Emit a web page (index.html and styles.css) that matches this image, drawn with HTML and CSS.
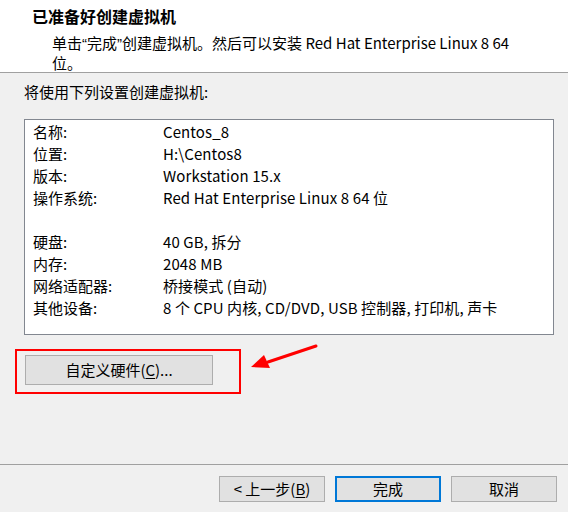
FILE: index.html
```html
<!DOCTYPE html>
<html lang="zh-CN">
<head>
<meta charset="utf-8">
<title>新建虚拟机向导</title>
<link rel="stylesheet" href="styles.css">
</head>
<body>
<div class="wizard">
  <header class="head">
    <div class="title">已准备好创建虚拟机</div>
    <div class="subtitle">单击<span class="q">“</span>完成<span class="q">”</span>创建虚拟机。然后可以安装 Red Hat Enterprise Linux 8 64<br>位。</div>
  </header>
  <main class="content">
    <div class="intro">将使用下列设置创建虚拟机:</div>
    <div class="summary">
      <div class="row"><span class="key">名称:</span><span class="val">Centos_8</span></div>
      <div class="row"><span class="key">位置:</span><span class="val">H:\Centos8</span></div>
      <div class="row"><span class="key">版本:</span><span class="val">Workstation 15.x</span></div>
      <div class="row"><span class="key">操作系统:</span><span class="val">Red Hat Enterprise Linux 8 64 位</span></div>
      <div class="row"><span class="key"></span><span class="val"></span></div>
      <div class="row"><span class="key">硬盘:</span><span class="val">40 GB, 拆分</span></div>
      <div class="row"><span class="key">内存:</span><span class="val">2048 MB</span></div>
      <div class="row"><span class="key">网络适配器:</span><span class="val">桥接模式 (自动)</span></div>
      <div class="row"><span class="key">其他设备:</span><span class="val">8 个 CPU 内核, CD/DVD, USB 控制器, 打印机, 声卡</span></div>
    </div>
    <div class="custom-wrap">
      <button class="btn custom">自定义硬件(<u>C</u>)...</button>
      <div class="highlight"></div>
      <svg class="arrow" width="70" height="30" viewBox="0 0 70 30">
        <line x1="66" y1="3" x2="18" y2="19" stroke="#ff0000" stroke-width="3" stroke-linecap="round"/>
        <polygon points="1,24 14,12 20,25" fill="#ff0000"/>
      </svg>
    </div>
  </main>
  <footer class="foot">
    <button class="btn">&lt; 上一步(<u>B</u>)</button>
    <button class="btn primary">完成</button>
    <button class="btn">取消</button>
  </footer>
</div>
</body>
</html>
```

FILE: styles.css
```css
* { box-sizing: border-box; }
html, body {
  margin: 0;
  padding: 0;
  width: 568px;
  height: 512px;
  overflow: hidden;
  background: #f0f0f0;
}
body {
  font-family: "Noto Sans CJK SC", "Noto Sans", sans-serif;
  font-size: 15px;
  color: #000;
}
.wizard {
  display: flex;
  flex-direction: column;
  height: 512px;
}
.head {
  background: #fff;
  height: 73px;
  border-bottom: 1px solid #a0a0a0;
  padding: 6px 0 0 32px;
}
.title {
  font-weight: bold;
  font-size: 16px;
  line-height: 20px;
}
.subtitle {
  margin-top: 7px;
  padding-left: 20px;
  line-height: 19px;
}
.q {
  font-family: "Liberation Sans", sans-serif;
}
.content {
  flex: 1;
  padding: 9px 0 0 24px;
}
.intro {
  line-height: 20px;
}
.summary {
  margin-top: 17px;
  width: 530px;
  height: 216px;
  background: #fff;
  border: 1px solid #828790;
  padding: 1px 0 0 8px;
}
.row {
  display: flex;
  height: 22px;
  line-height: 22px;
}
.key { width: 130px; }
.val { letter-spacing: 0.1px; }
.custom-wrap {
  position: relative;
  margin-top: 20px;
  padding-left: 1px;
}
.btn {
  font: inherit;
  color: #000;
  background: #e1e1e1;
  border: 1px solid #adadad;
  height: 26px;
  width: 106px;
  padding: 0;
  line-height: 22px;
}
.btn u { text-decoration: underline; text-underline-offset: 2px; }
.custom {
  width: 188px;
  height: 30px;
  line-height: 26px;
}
.highlight {
  position: absolute;
  left: -9px;
  top: -6px;
  width: 226px;
  height: 45px;
  border: 2px solid #ff0000;
}
.arrow {
  position: absolute;
  left: 226px;
  top: -12px;
}
.foot {
  height: 48px;
  border-top: 1px solid #a0a0a0;
  display: flex;
  justify-content: flex-end;
  gap: 10px;
  padding: 11px 11px 0 0;
}
.primary {
  border: 2px solid #0078d7;
}
```
